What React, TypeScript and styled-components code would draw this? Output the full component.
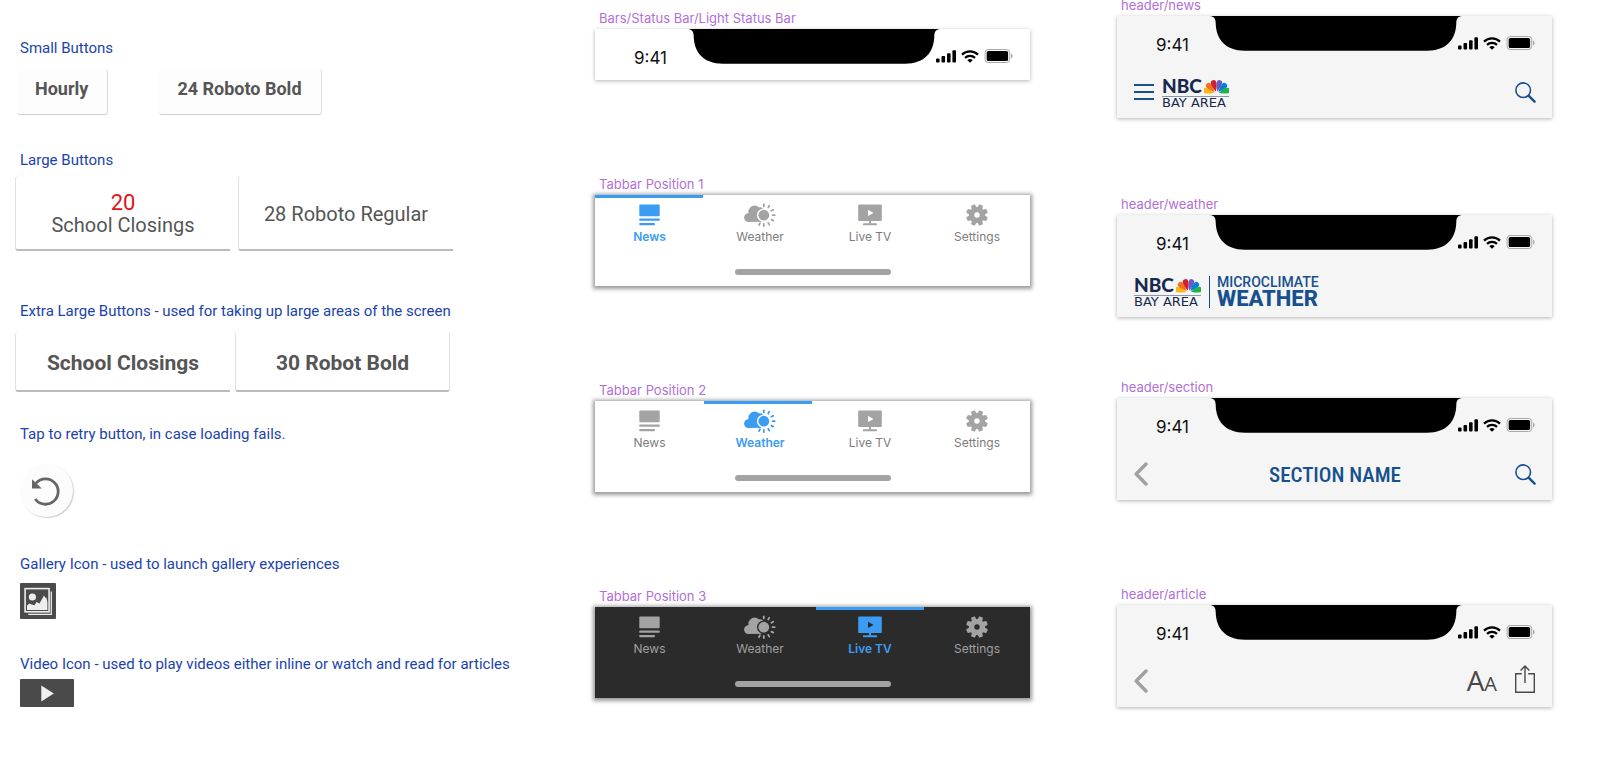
import React from 'react';
import styled, { createGlobalStyle, css } from 'styled-components';

const GlobalStyle = createGlobalStyle`
  * { box-sizing: border-box; }
  body {
    margin: 0;
    background: #fff;
    font-family: Roboto, 'Liberation Sans', sans-serif;
  }
  button {
    margin: 0;
    padding: 0;
    border: 0;
    background: none;
    font: inherit;
    color: inherit;
    cursor: pointer;
  }
  svg { display: block; flex: none; }
`;

/* ---------- page ---------- */

const Page = styled.main`
  display: grid;
  grid-template-columns: 493fr 435fr 435fr;
  column-gap: 87px;
  align-items: start;
  padding: 0 50px 48px 15px;
`;

const Column = styled.div<{ $top: number }>`
  display: flex;
  flex-direction: column;
  margin-top: ${p => p.$top}px;
  min-width: 0;
`;

/* ---------- buttons column ---------- */

const Group = styled.section<{ $space?: number }>`
  margin-bottom: ${p => p.$space ?? 0}px;
`;

const GroupTitle = styled.h2<{ $gap: number }>`
  margin: 0 0 ${p => p.$gap}px;
  padding-left: 5px;
  font-size: 15px;
  line-height: 20px;
  font-weight: 400;
  color: #1a43ad;
  white-space: nowrap;
`;

const ButtonRow = styled.div<{ $gap?: number; $indent?: number }>`
  display: flex;
  gap: ${p => p.$gap ?? 0}px;
  padding-left: ${p => p.$indent ?? 0}px;
`;

const SmallButton = styled.button`
  height: 46px;
  padding: 0 19px 5px 18px;
  border-right: 1px solid #dcdcdc;
  border-bottom: 1px solid #cfcfcf;
  border-radius: 3px;
  background: #fdfdfd;
  color: #555;
  font-size: 18px;
  line-height: 22px;
  font-weight: 700;
`;

const tile = css`
  display: flex;
  flex-direction: column;
  align-items: center;
  justify-content: center;
  flex: 0 1 215px;
  padding-top: 3px;
  border-left: 1px solid #e2e2e2;
  border-bottom: 2px solid #bbb;
  border-radius: 3px 0 0 3px;
  background: #fff;
  color: #555;
  line-height: 22px;
`;

const LargeButton = styled.button`
  ${tile}
  height: 75px;
  font-size: 20px;
`;

const Count = styled.span`
  font-size: 22px;
  color: #e0131b;
`;

const ExtraLargeButton = styled.button<{ $closed?: boolean }>`
  ${tile}
  height: 60px;
  font-size: 21px;
  font-weight: 700;
  ${p => p.$closed && css`
    border-right: 1px solid #e2e2e2;
    border-radius: 3px;
  `}
`;

const RetryButton = styled.button`
  display: grid;
  place-items: center;
  width: 53px;
  height: 53px;
  border-radius: 50%;
  background: #fcfcfc;
  box-shadow: 1px 1px 1px rgba(0, 0, 0, 0.2);
`;

const MediaButton = styled.button<{ $wide?: boolean }>`
  display: grid;
  place-items: center;
  width: ${p => (p.$wide ? 54 : 36)}px;
  height: ${p => (p.$wide ? 28 : 36)}px;
  border-radius: 1px;
  background: #4a4a4a;
`;

/* ---------- framed bars ---------- */

const Frame = styled.figure<{ $space?: number }>`
  margin: 0 0 ${p => p.$space ?? 0}px;
`;

const FrameTitle = styled.figcaption`
  margin-bottom: 3px;
  padding-left: 4px;
  font-family: Inter, 'Liberation Sans', sans-serif;
  font-size: 13px;
  line-height: 16px;
  color: #b26fd6;
  white-space: nowrap;
`;

const Panel = styled.div<{ $tone?: 'white' | 'grey' }>`
  background: ${p => (p.$tone === 'grey' ? '#f5f5f5' : '#fff')};
  box-shadow: 0 1px 4px rgba(0, 0, 0, 0.3);
`;

const StatusRow = styled.div`
  display: grid;
  grid-template-columns: 1fr 242px 1fr;
  align-items: start;
  height: 51px;
  padding-left: 3px;
`;

const Time = styled.time`
  padding: 19px 0 0 36px;
  font-family: Inter, 'Liberation Sans', sans-serif;
  font-size: 17px;
  line-height: 20px;
  color: #111;
`;

const Notch = styled.svg`
  width: 252px;
  height: 35px;
  margin: 0 -5px;
`;

const StatusIcons = styled.div`
  display: flex;
  align-items: center;
  gap: 5px;
  padding: 20px 0 0 1px;
`;

const Toolbar = styled.div`
  display: flex;
  align-items: center;
  gap: 8px;
  height: 51px;
  padding: 0 16px 0 17px;
  color: #16508f;
`;

const IconButton = styled.button`
  display: grid;
  place-items: center;
`;

const Spacer = styled.div`
  flex: 1;
`;

const SectionName = styled.h1`
  flex: 1;
  margin: 0;
  text-align: center;
  font-family: 'Roboto Condensed', Roboto, sans-serif;
  font-size: 21px;
  line-height: 26px;
  font-weight: 500;
`;

const BackSlot = styled(IconButton)`
  width: 21px;
  justify-items: start;
`;

const TextSize = styled.button`
  margin-right: 10px;
  font-family: 'Open Sans', sans-serif;
  font-size: 28px;
  line-height: 30px;
  font-weight: 500;
  color: #484848;
`;

const SmallA = styled.span`
  font-size: 20px;
`;

/* ---------- station logo ---------- */

const Logo = styled.div`
  display: flex;
  flex-direction: column;
  width: 67px;
  color: #17294f;
`;

const LogoTop = styled.div`
  display: flex;
  align-items: flex-end;
  justify-content: space-between;
  height: 20px;
  padding-bottom: 1px;
  border-bottom: 1px solid #8c96ab;
`;

const Network = styled.span`
  font-family: Lato, sans-serif;
  font-size: 19px;
  line-height: 18px;
  font-weight: 900;
`;

const Region = styled.span`
  font-family: 'DejaVu Sans', sans-serif;
  font-size: 13px;
  line-height: 12px;
  white-space: nowrap;
`;

const Brand = styled.div`
  display: flex;
  flex-direction: column;
  padding-left: 7px;
  border-left: 1px solid #16508f;
  height: 32px;
`;

const BrandTop = styled.span`
  font-size: 14px;
  line-height: 12px;
  font-weight: 500;
`;

const BrandBottom = styled.span`
  font-size: 22px;
  line-height: 22px;
  font-weight: 800;
`;

/* ---------- tab bar ---------- */

const TabPanel = styled.nav<{ $dark?: boolean }>`
  display: flex;
  flex-direction: column;
  height: 91px;
  background: ${p => (p.$dark ? '#2b2b2b' : '#fff')};
  box-shadow: 0 1px 4px 2px rgba(0, 0, 0, 0.4);
`;

const Tabs = styled.div`
  display: grid;
  grid-template-columns: minmax(0, 109fr) minmax(0, 112fr) minmax(0, 108fr) minmax(0, 106fr);
`;

const Tab = styled.button<{ $active: boolean; $dark?: boolean }>`
  display: flex;
  flex-direction: column;
  align-items: center;
  font-family: Inter, 'Liberation Sans', sans-serif;
  font-size: 12px;
  line-height: 16px;
  font-weight: ${p => (p.$active ? 600 : 400)};
  color: ${p => (p.$active ? '#3b9cf3' : p.$dark ? '#a0a0a0' : '#7d7d7d')};
`;

const Indicator = styled.span<{ $on: boolean }>`
  align-self: flex-start;
  width: 108px;
  max-width: 100%;
  height: 3px;
  margin-bottom: 5px;
  background: ${p => (p.$on ? '#3b9cf3' : 'transparent')};
`;

const TabIcon = styled.span<{ $active: boolean }>`
  display: grid;
  place-items: center;
  height: 24px;
  margin-bottom: 2px;
  color: ${p => (p.$active ? '#3b9cf3' : '#a3a3a3')};
`;

const HomeBar = styled.div`
  align-self: center;
  width: 156px;
  height: 6px;
  margin-top: 24px;
  border-radius: 3px;
  background: #a3a3a3;
`;

/* ---------- drawings ---------- */

const SignalIcon = () => (
  <svg width="20" height="13" viewBox="0 0 20 13" fill="#000">
    <rect x="0" y="8.5" width="3.6" height="4" rx="1" />
    <rect x="5.5" y="6" width="3.6" height="6.5" rx="1" />
    <rect x="11" y="3.3" width="3.6" height="9.2" rx="1" />
    <rect x="16.4" y="0.3" width="3.6" height="12.2" rx="1" />
  </svg>
);

const WifiIcon = () => (
  <svg width="18" height="13" viewBox="0 0 18 13" fill="none" stroke="#000" strokeWidth="2.2">
    <path d="M1 4.6A11.6 11.6 0 0 1 17 4.6" />
    <path d="M4 7.9A7.2 7.2 0 0 1 14 7.9" />
    <path d="M9 12.8L6.3 10.2A4 4 0 0 1 11.7 10.2Z" fill="#000" stroke="none" />
  </svg>
);

const BatteryIcon = () => (
  <svg width="29" height="14" viewBox="0 0 29 14">
    <rect x="1.1" y="0.5" width="24.6" height="13" rx="3" fill="none" stroke="#a9a9a9" />
    <rect x="2.7" y="2" width="21.4" height="10" rx="1.6" fill="#000" />
    <path d="M27 4.6C28 5.1 28.6 6 28.6 7S28 8.9 27 9.4Z" fill="#a9a9a9" />
  </svg>
);

const MenuIcon = () => (
  <svg width="20" height="18" viewBox="0 0 20 18" fill="currentColor">
    <rect y="0" width="20" height="2" />
    <rect y="7" width="20" height="2" />
    <rect y="14" width="20" height="2" />
  </svg>
);

const SearchIcon = () => (
  <svg width="21" height="21" viewBox="0 0 21 21" fill="none" stroke="currentColor">
    <circle cx="8.2" cy="8.2" r="7.3" strokeWidth="1.6" />
    <path d="M13.8 13.8L19.6 19.6" strokeWidth="2.4" strokeLinecap="round" />
  </svg>
);

const BackIcon = () => (
  <svg width="14" height="26" viewBox="0 0 14 26" fill="none" stroke="#a0a0a0" strokeWidth="3.4" strokeLinecap="round" strokeLinejoin="round">
    <path d="M12 2L2.2 12L12 22" />
  </svg>
);

const ShareIcon = () => (
  <svg width="21" height="34" viewBox="0 0 21 34" fill="none" stroke="#4a4a4a" strokeWidth="1.4">
    <path d="M6.8 8.7H0.7V27.3H19.3V8.7H13.2" />
    <path d="M10 18V1.2M5.6 5.6L10 1.1L14.4 5.6" />
  </svg>
);

const feather = 'M0 -2.5C-1 -4.5 -2.8 -8.5 -2.8 -11.2A2.8 2.8 0 0 1 2.8 -11.2C2.8 -8.5 1 -4.5 0 -2.5Z';
const feathers: [number, string][] = [
  [-73, '#fcb711'],
  [-44, '#f37021'],
  [-15, '#d0202e'],
  [15, '#6a5bc2'],
  [44, '#0a7fd6'],
  [73, '#23b14b'],
];

const Peacock = () => (
  <svg width="25" height="16" viewBox="0 0 25 16">
    {feathers.map(([angle, colour]) => (
      <path key={angle} d={feather} fill={colour} transform={`translate(12.5 14.8) rotate(${angle})`} />
    ))}
  </svg>
);

const NewsIcon = () => (
  <svg width="21" height="22" viewBox="0 0 21 22" fill="currentColor">
    <rect x="0.3" y="0.5" width="20.4" height="11.8" rx="1" />
    <rect x="0.3" y="14.6" width="20.4" height="2.2" rx="0.6" />
    <rect x="0.3" y="19" width="15.6" height="2.2" rx="0.6" />
  </svg>
);

const WeatherIcon = ({ id }: { id: string }) => (
  <svg width="32" height="24" viewBox="0 0 32 24" fill="currentColor">
    <mask id={id}>
      <rect width="32" height="24" fill="#fff" />
      <circle cx="19.8" cy="12.2" r="6.8" fill="#000" />
    </mask>
    <g mask={`url(#${id})`}>
      <circle cx="4.4" cy="14.6" r="4.3" />
      <circle cx="10.6" cy="8.8" r="6.2" />
      <circle cx="16" cy="7.6" r="3.4" />
      <rect x="4.4" y="9.6" width="13" height="9.3" />
    </g>
    <circle cx="19.8" cy="12.2" r="5.4" />
    {[0, 30, 60, 90, 120, 150, 180, 206].map(a => (
      <rect key={a} x="-0.9" y="-11.8" width="1.8" height="3.9" rx="0.9" transform={`translate(19.8 12.2) rotate(${a})`} />
    ))}
  </svg>
);

const TvIcon = () => (
  <svg width="24" height="22" viewBox="0 0 24 22" fill="currentColor">
    <path fillRule="evenodd" d="M1.2 0.5H22.8Q23.8 0.5 23.8 1.5V16Q23.8 17 22.8 17H1.2Q0.2 17 0.2 16V1.5Q0.2 0.5 1.2 0.5ZM10 5.8V12L15.6 8.9Z" />
    <rect x="11" y="16.8" width="2" height="3" />
    <rect x="5" y="19.2" width="14" height="2" rx="0.6" />
  </svg>
);

const GearIcon = () => (
  <svg width="22" height="22" viewBox="-11 -11 22 22" fill="currentColor">
    <circle r="5.4" fill="none" stroke="currentColor" strokeWidth="5.4" />
    {[22.5, 67.5, 112.5, 157.5, 202.5, 247.5, 292.5, 337.5].map(a => (
      <path key={a} d="M-2.6 -6.6L-2.1 -10.3Q-2 -10.9 -1.4 -10.9H1.4Q2 -10.9 2.1 -10.3L2.6 -6.6Z" transform={`rotate(${a})`} />
    ))}
  </svg>
);

const RetryIcon = () => (
  <svg width="30" height="30" viewBox="0 0 30 30" fill="none">
    <path d="M4 7.1A12.7 12.7 0 1 1 3.2 23" stroke="#666" strokeWidth="2.8" />
    <path d="M0 3.2V12.6H9.8Z" fill="#666" />
  </svg>
);

const GalleryIcon = () => (
  <svg width="28" height="28" viewBox="0 0 28 28" fill="none">
    <path d="M27.3 4.6V27.3H4.2" stroke="#ededed" strokeWidth="1.3" />
    <rect x="1.1" y="1.6" width="24" height="23.2" stroke="#ededed" strokeWidth="1.6" />
    <circle cx="8.4" cy="10" r="3.6" fill="#ededed" />
    <path d="M3 23V18.5L5.5 16.5L7.5 17.5L10.5 18.2L12.5 15L15.5 16.5L20 8.5L21.5 11L22.3 10.6L23.4 15V23Z" fill="#ededed" />
  </svg>
);

const PlayIcon = () => (
  <svg width="13" height="17" viewBox="0 0 13 17" fill="#f0f0f0">
    <path d="M0.3 0.4L12.8 8.5L0.3 16.6Z" />
  </svg>
);

/* ---------- composed parts ---------- */

const StatusBar = () => (
  <StatusRow>
    <Time>9:41</Time>
    <Notch viewBox="0 0 252 35" aria-hidden="true">
      <path d="M0 0H252C248 0.4 246.4 2.6 246.3 7C246 23 237 34.7 217 34.7H35C15 34.7 6 23 5.7 7C5.6 2.6 4 0.4 0 0Z" fill="#000" />
    </Notch>
    <StatusIcons>
      <SignalIcon />
      <WifiIcon />
      <BatteryIcon />
    </StatusIcons>
  </StatusRow>
);

const StationLogo = () => (
  <Logo>
    <LogoTop>
      <Network>NBC</Network>
      <Peacock />
    </LogoTop>
    <Region>BAY AREA</Region>
  </Logo>
);

const tabNames = ['News', 'Weather', 'Live TV', 'Settings'];

const TabBar = ({ title, active, dark, space }: { title: string; active: number; dark?: boolean; space?: number }) => (
  <Frame $space={space}>
    <FrameTitle>{title}</FrameTitle>
    <TabPanel $dark={dark} aria-label={title}>
      <Tabs>
        {tabNames.map((name, i) => (
          <Tab key={name} $active={i === active} $dark={dark} aria-current={i === active ? 'page' : undefined}>
            <Indicator $on={i === active} />
            <TabIcon $active={i === active}>
              {i === 0 && <NewsIcon />}
              {i === 1 && <WeatherIcon id={`sun-gap-${active}`} />}
              {i === 2 && <TvIcon />}
              {i === 3 && <GearIcon />}
            </TabIcon>
            {name}
          </Tab>
        ))}
      </Tabs>
      <HomeBar />
    </TabPanel>
  </Frame>
);

const Header = ({ title, space, children }: { title: string; space?: number; children: React.ReactNode }) => (
  <Frame $space={space}>
    <FrameTitle>{title}</FrameTitle>
    <Panel $tone="grey">
      <StatusBar />
      <Toolbar>{children}</Toolbar>
    </Panel>
  </Frame>
);

export default function App() {
  return (
    <>
      <GlobalStyle />
      <Page>
        <Column $top={38}>
          <Group $space={35}>
            <GroupTitle $gap={11}>Small Buttons</GroupTitle>
            <ButtonRow $gap={51} $indent={2}>
              <SmallButton>Hourly</SmallButton>
              <SmallButton>24 Roboto Bold</SmallButton>
            </ButtonRow>
          </Group>
          <Group $space={50}>
            <GroupTitle $gap={6}>Large Buttons</GroupTitle>
            <ButtonRow $gap={8}>
              <LargeButton>
                <Count>20</Count>
                School Closings
              </LargeButton>
              <LargeButton>28 Roboto Regular</LargeButton>
            </ButtonRow>
          </Group>
          <Group $space={32}>
            <GroupTitle $gap={11}>Extra Large Buttons - used for taking up large areas of the screen</GroupTitle>
            <ButtonRow $gap={5}>
              <ExtraLargeButton>School Closings</ExtraLargeButton>
              <ExtraLargeButton $closed>30 Robot Bold</ExtraLargeButton>
            </ButtonRow>
          </Group>
          <Group $space={37}>
            <GroupTitle $gap={20}>Tap to retry button, in case loading fails.</GroupTitle>
            <ButtonRow $indent={5}>
              <RetryButton aria-label="Retry">
                <RetryIcon />
              </RetryButton>
            </ButtonRow>
          </Group>
          <Group $space={35}>
            <GroupTitle $gap={9}>Gallery Icon - used to launch gallery experiences</GroupTitle>
            <ButtonRow $indent={5}>
              <MediaButton aria-label="Open gallery">
                <GalleryIcon />
              </MediaButton>
            </ButtonRow>
          </Group>
          <Group>
            <GroupTitle $gap={5}>Video Icon - used to play videos either inline or watch and read for articles</GroupTitle>
            <ButtonRow $indent={5}>
              <MediaButton $wide aria-label="Play video">
                <PlayIcon />
              </MediaButton>
            </ButtonRow>
          </Group>
        </Column>

        <Column $top={10}>
          <Frame $space={96}>
            <FrameTitle>Bars/Status Bar/Light Status Bar</FrameTitle>
            <Panel>
              <StatusBar />
            </Panel>
          </Frame>
          <TabBar title="Tabbar Position 1" active={0} space={96} />
          <TabBar title="Tabbar Position 2" active={1} space={96} />
          <TabBar title="Tabbar Position 3" active={2} dark />
        </Column>

        <Column $top={-3}>
          <Header title="header/news" space={78}>
            <IconButton aria-label="Menu">
              <MenuIcon />
            </IconButton>
            <StationLogo />
            <Spacer />
            <IconButton aria-label="Search">
              <SearchIcon />
            </IconButton>
          </Header>
          <Header title="header/weather" space={62}>
            <StationLogo />
            <Brand>
              <BrandTop>MICROCLIMATE</BrandTop>
              <BrandBottom>WEATHER</BrandBottom>
            </Brand>
          </Header>
          <Header title="header/section" space={86}>
            <BackSlot aria-label="Back">
              <BackIcon />
            </BackSlot>
            <SectionName>SECTION NAME</SectionName>
            <IconButton aria-label="Search">
              <SearchIcon />
            </IconButton>
          </Header>
          <Header title="header/article">
            <BackSlot aria-label="Back">
              <BackIcon />
            </BackSlot>
            <Spacer />
            <TextSize aria-label="Text size">
              A<SmallA>A</SmallA>
            </TextSize>
            <IconButton aria-label="Share">
              <ShareIcon />
            </IconButton>
          </Header>
        </Column>
      </Page>
    </>
  );
}
